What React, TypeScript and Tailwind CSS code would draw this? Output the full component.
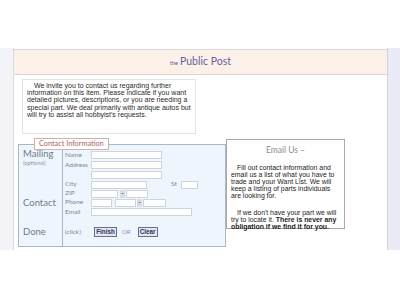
import React from "react";

const sans = "font-['Liberation_Sans',Arial,sans-serif]";
const soft = "font-['Lato','Open_Sans',sans-serif]";

const Box = ({ w }: { w: string }) => (
  <input
    type="text"
    className={`${w} h-[8px] border border-[#cdd4dc] bg-white outline-none`}
  />
);

const Dash = () => (
  <span className="flex h-[8px] w-[5px] items-center justify-center bg-[#d9dde2] text-[7px] leading-none text-[#333]">
    -
  </span>
);

const Row = ({
  label,
  h,
  children,
}: {
  label: string;
  h: string;
  children?: React.ReactNode;
}) => (
  <div className={`flex ${h} items-center`}>
    <span className="w-[28px] pl-[2px] text-[6.5px] leading-none text-[#7d8796]">
      {label}
    </span>
    {children}
  </div>
);

const ContactForm = (): JSX.Element => {
  return (
    <div className="relative mt-[6px] h-[103px] w-[208px] border border-[#a9b8c9] bg-[#eef5fc]">
      <span
        className={`absolute -top-[7px] left-[15px] flex h-[12px] items-center border border-[#cfb0b0] bg-white px-[4px] text-[7.3px] leading-none text-[#b0605f] ${soft}`}
      >
        Contact Information
      </span>
      <div className={`flex h-full ${soft}`}>
        <div className="flex w-[44px] flex-col border-r border-[#a9b8c9] pl-[4px] pt-[3px] text-[#6f7c8e]">
          <p className="h-[12px] text-[9.5px] leading-[12px]">Mailing</p>
          <p className="h-[7px] text-[5.5px] leading-[7px] text-[#8a94a2]">
            (optional)
          </p>
          <p className="mt-[30px] h-[12px] text-[9.5px] leading-[12px]">Contact</p>
          <p className="mt-[17px] h-[12px] text-[9.5px] leading-[12px]">Done</p>
        </div>
        <div className="flex flex-1 flex-col pt-[5px]">
          <Row label="Name" h="h-[10px]">
            <Box w="w-[71px]" />
          </Row>
          <Row label="Address" h="h-[10px]">
            <Box w="w-[71px]" />
          </Row>
          <Row label="" h="h-[10px]">
            <Box w="w-[71px]" />
          </Row>
          <Row label="City" h="h-[9px]">
            <Box w="w-[56px]" />
            <span className="ml-[24px] w-[10px] text-[6.5px] leading-none text-[#7d8796]">
              St
            </span>
            <Box w="w-[17px]" />
          </Row>
          <Row label="ZIP" h="h-[9px]">
            <Box w="w-[27px]" />
            <span className="ml-[2px]">
              <Dash />
            </span>
            <span className="ml-[1px]">
              <Box w="w-[22px]" />
            </span>
          </Row>
          <Row label="Phone" h="h-[9px]">
            <Box w="w-[21px]" />
            <span className="ml-[3px]">
              <Box w="w-[21px]" />
            </span>
            <span className="ml-[1px]">
              <Dash />
            </span>
            <span className="ml-[1px]">
              <Box w="w-[23px]" />
            </span>
          </Row>
          <Row label="Email" h="h-[10px]">
            <Box w="w-[101px]" />
          </Row>
          <Row label="(click)" h="h-[10px] mt-[10px]">
            <button
              className={`ml-[3px] flex h-[10px] w-[23px] items-center justify-center border border-[#6b6f8a] bg-[#e3e5f3] text-[6.3px] font-bold leading-none text-[#2c3160] ${sans}`}
            >
              Finish
            </button>
            <span className="ml-[5px] text-[6px] leading-none text-[#8a94a2]">
              OR
            </span>
            <button
              className={`ml-[7px] flex h-[10px] w-[20px] items-center justify-center border border-[#6b6f8a] bg-[#e3e5f3] text-[6.3px] font-bold leading-none text-[#2c3160] ${sans}`}
            >
              Clear
            </button>
          </Row>
        </div>
      </div>
    </div>
  );
};

const EmailUs = (): JSX.Element => (
  <div
    className={`mt-[1px] h-[90px] w-[119px] border border-[#a8a8a8] bg-white px-[4px] pt-[5px] text-[6.9px] leading-[7px] text-[#222] ${sans}`}
  >
    <p className={`text-center text-[8.5px] leading-[10px] text-[#8c8c8c] ${soft}`}>
      Email Us –
    </p>
    <p className="mt-[8.5px] indent-[6px] whitespace-nowrap">
      Fill out contact information and
      <br />
      email us a list of what you have to
      <br />
      trade and your Want List. We will
      <br />
      keep a listing of parts individuals
      <br />
      are looking for.
    </p>
    <p className="mt-[10px] indent-[6px] whitespace-nowrap">
      If we don't have your part we will
      <br />
      try to locate it. <b>There is never any</b>
      <br />
      <b>obligation if we find it for you.</b>
    </p>
  </div>
);

export default function App(): JSX.Element {
  return (
    <div className="h-[300px] w-[400px] overflow-hidden bg-white">
      <div className="h-[48px]" />
      <div className="flex h-[202px]">
        <div className="w-[14px] border-r border-[#dadae2] bg-[#f3f3f8]" />
        <div className="flex-1 border-r border-[#d2d2d8] bg-white">
          <div className="mt-[1px] flex h-[26px] items-center justify-center border-y border-[#d9d5d8] bg-[#fbf1e8]">
            <span className={`flex items-baseline text-[#5f5590] ${soft}`}>
              <span className="text-[5.5px]">the</span>
              <span className="ml-[2px] text-[10.5px] text-[#6a5ea2]">Public Post</span>
            </span>
          </div>
          <div
            className={`ml-[8px] mt-[4px] h-[55px] w-[174px] border border-[#e2e2e2] bg-white px-[4px] pt-[2px] text-[7px] leading-[7.2px] text-[#2a2a2a] ${sans}`}
          >
            <p className="indent-[7px]">
              We invite you to contact us regarding further information on this
              item. Please indicate if you want detailed pictures, descriptions,
              or you are needing a special part. We deal primarily with antique
              autos but will try to assist all hobbyist's requests.
            </p>
          </div>
          <div className="ml-[4px] mt-[4px] flex items-start">
            <ContactForm />
            <EmailUs />
          </div>
        </div>
        <div className="w-[12px] bg-[#ebebf7]" />
      </div>
    </div>
  );
}
